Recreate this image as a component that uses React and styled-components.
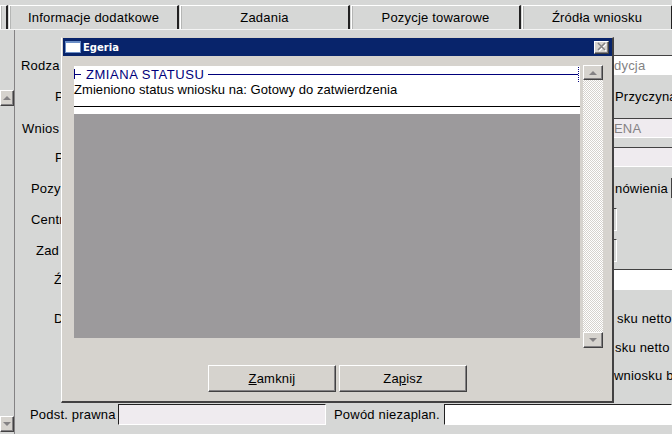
import React from 'react';
import styled, { createGlobalStyle, css } from 'styled-components';

const PAGE = '#d6d7d6';
const DIALOG = '#d6d3ce';
const NAVY = '#08246b';
const LAVENDER = '#efebef';

const GlobalStyle = createGlobalStyle`
  html, body {
    margin: 0;
    padding: 0;
    background: ${PAGE};
  }
  body {
    font-family: "Liberation Sans", Arial, sans-serif;
    font-size: 13px;
    letter-spacing: 0.2px;
    color: #000;
  }
`;

const raised = css`
  background: ${DIALOG};
  border-top: 1px solid #fff;
  border-left: 1px solid #fff;
  border-right: 1px solid #424142;
  border-bottom: 1px solid #424142;
  box-shadow: inset -1px -1px 0 #848284;
  box-sizing: border-box;
`;

const Screen = styled.div`
  position: relative;
  width: 672px;
  height: 434px;
  overflow: hidden;
  background: ${PAGE};
`;

const TabBar = styled.div`
  display: flex;
  gap: 1px;
  height: 30px;
  padding-top: 5px;
  box-sizing: border-box;
  border-bottom: 1px solid #f4f4f4;
`;

const Tab = styled.div`
  width: ${(p) => p.$width}px;
  flex: none;
  display: flex;
  align-items: center;
  justify-content: center;
  box-sizing: border-box;
  border-top: 1px solid #fff;
  border-left: 1px solid #fff;
  border-right: 2px solid #212021;
  box-shadow: inset 1px 0 0 #b5b6b5;
`;

const Body = styled.div`
  display: flex;
  height: 404px;
`;

const SideScroll = styled.div`
  width: 15px;
  flex: none;
  display: flex;
  flex-direction: column;
  justify-content: space-between;
  padding: 60px 0 2px;
  box-sizing: border-box;
  border-right: 1px solid #848284;
`;

const ArrowButton = styled.div`
  ${raised}
  display: flex;
  align-items: center;
  justify-content: center;
  flex: none;
  width: ${(p) => p.$width || 14}px;
  height: ${(p) => p.$height || 16}px;
`;

const Arrow = styled.span`
  width: 0;
  height: 0;
  border-left: 4px solid transparent;
  border-right: 4px solid transparent;
  ${(p) =>
    p.$down
      ? 'border-top: 4px solid #848284;'
      : 'border-bottom: 4px solid #848284;'}
`;

const Form = styled.div`
  flex: 1;
  display: flex;
  flex-direction: column;
  min-width: 0;
`;

const Row = styled.div`
  display: flex;
  justify-content: space-between;
  align-items: center;
  height: ${(p) => p.$height}px;
  margin-top: ${(p) => p.$top}px;
`;

const Label = styled.span`
  padding-left: ${(p) => p.$indent}px;
  white-space: nowrap;
`;

const RightCell = styled.div`
  width: 58px;
  height: 100%;
  flex: none;
  box-sizing: border-box;
  padding-left: ${(p) => p.$pad || 0}px;
  display: flex;
  align-items: center;
  gap: 3px;
  white-space: nowrap;
  overflow: hidden;
`;

const Field = styled.div`
  flex: ${(p) => (p.$width ? 'none' : 1)};
  width: ${(p) => (p.$width ? `${p.$width}px` : 'auto')};
  height: 100%;
  box-sizing: border-box;
  display: flex;
  align-items: center;
  color: #848284;
  background: ${(p) => p.$bg || '#fff'};
  border-top: 1px solid #424142;
  border-bottom: 1px solid #fff;
  ${(p) => p.$framed && 'border-right: 1px solid #fff;'}
`;

const StubField = styled.div`
  width: 2px;
  height: 20px;
  flex: none;
  background: ${LAVENDER};
  border-left: 1px solid #424142;
  box-sizing: border-box;
`;

const BottomRow = styled.div`
  display: flex;
  align-items: center;
  height: 21px;
  margin-top: 19px;
`;

const BottomLabel = styled.span`
  padding-left: ${(p) => p.$indent}px;
  width: ${(p) => p.$width}px;
  box-sizing: border-box;
  flex: none;
  white-space: nowrap;
`;

const BottomInput = styled.div`
  flex: ${(p) => (p.$width ? 'none' : 1)};
  width: ${(p) => (p.$width ? `${p.$width}px` : 'auto')};
  height: 100%;
  box-sizing: border-box;
  background: ${(p) => p.$bg};
  border-top: 1px solid #212021;
  border-left: 1px solid #212021;
  border-right: 1px solid #fff;
  border-bottom: 1px solid #fff;
`;

const Dialog = styled.div`
  position: absolute;
  left: 61px;
  top: 37px;
  width: 553px;
  height: 366px;
  box-sizing: border-box;
  display: flex;
  flex-direction: column;
  background: ${DIALOG};
  border-top: 1px solid #d6d3ce;
  border-left: 1px solid #fff;
  border-right: 2px solid #424142;
  border-bottom: 2px solid #424142;
  padding: 0 0 0 1px;
`;

const TitleBar = styled.div`
  display: flex;
  align-items: center;
  height: 18px;
  flex: none;
  background: ${NAVY};
  color: #fff;
  font-family: "DejaVu Sans", Verdana, sans-serif;
  font-size: 10px;
  font-weight: 700;
  letter-spacing: 0;
  padding: 0 3px 0 2px;
  gap: 2px;
`;

const WindowIcon = styled.span`
  width: 16px;
  height: 12px;
  flex: none;
  box-sizing: border-box;
  background: #fff;
  border-top: 2px solid #6b8ec6;
  border-left: 1px solid #6b8ec6;
  border-right: 1px solid #6b8ec6;
  border-bottom: 1px solid #6b8ec6;
`;

const TitleText = styled.span`
  flex: 1;
`;

const CloseButton = styled.div`
  ${raised}
  width: 15px;
  height: 13px;
  display: flex;
  align-items: center;
  justify-content: center;
`;

const Main = styled.div`
  display: flex;
  align-items: flex-start;
  height: 282px;
  margin-top: 10px;
  padding-left: 11px;
  flex: none;
`;

const Document = styled.div`
  width: 506px;
  height: 272px;
  flex: none;
  display: flex;
  flex-direction: column;
  background: #9c9a9c;
`;

const Note = styled.div`
  height: 48px;
  flex: none;
  box-sizing: border-box;
  background: #fff;
  padding-top: 1px;
`;

const Legend = styled.div`
  display: flex;
  align-items: center;
  height: 14px;
  color: #00007b;
  letter-spacing: 0.55px;
`;

const LegendTick = styled.span`
  width: 7px;
  height: 10px;
  flex: none;
  margin-right: 5px;
  box-sizing: border-box;
  border-left: 1px solid #00007b;
  background: linear-gradient(#00007b, #00007b) center / 100% 1px no-repeat;
`;

const LegendText = styled.span`
  padding: 0 4px 0 0;
  white-space: nowrap;
`;

const LegendLine = styled.span`
  flex: 1;
  height: 1px;
  background: #00007b;
`;

const LegendEnd = styled.span`
  width: 1px;
  height: 15px;
  flex: none;
  margin-right: 1px;
  background: repeating-linear-gradient(#00007b 0 1px, #fff 1px 2px);
`;

const Message = styled.div`
  height: 26px;
  box-sizing: border-box;
  padding-top: 1px;
  border-bottom: 1px solid #000;
  line-height: 16px;
  letter-spacing: 0.06px;
`;

const Scroll = styled.div`
  width: 20px;
  height: 283px;
  margin-left: 3px;
  margin-top: -1px;
  display: flex;
  flex-direction: column;
`;

const Hatch = styled.div`
  flex: 1;
  background-color: #fff;
  background-image: conic-gradient(${DIALOG} 25%, #fff 0 50%, ${DIALOG} 0 75%, #fff 0);
  background-size: 2px 2px;
`;

const Footer = styled.div`
  display: flex;
  justify-content: center;
  gap: 3px;
  margin-top: 17px;
`;

const Button = styled.div`
  ${raised}
  width: 128px;
  height: 27px;
  display: flex;
  align-items: center;
  justify-content: center;
`;

const Key = styled.span`
  text-decoration: underline;
`;

const tabs = [
  { width: 8, text: '' },
  { width: 170, text: 'Informacje dodatkowe' },
  { width: 170, text: 'Zadania' },
  { width: 170, text: 'Pozycje towarowe' },
  { width: 151, text: 'Źródła wniosku' },
];

export default function App() {
  return (
    <Screen>
      <GlobalStyle />

      <TabBar>
        {tabs.map((tab, index) => (
          <Tab key={index} $width={tab.width}>
            {tab.text}
          </Tab>
        ))}
      </TabBar>

      <Body>
        <SideScroll>
          <ArrowButton>
            <Arrow />
          </ArrowButton>
          <ArrowButton>
            <Arrow $down />
          </ArrowButton>
        </SideScroll>

        <Form>
          <Row $top={25} $height={20}>
            <Label $indent={6}>Rodza</Label>
            <RightCell>
              <Field>dycja</Field>
            </RightCell>
          </Row>
          <Row $top={10} $height={22}>
            <Label $indent={40}>P</Label>
            <RightCell $pad={1}>Przyczyna</RightCell>
          </Row>
          <Row $top={11} $height={20}>
            <Label $indent={7}>Wnios</Label>
            <RightCell>
              <Field $bg={LAVENDER}>ENA</Field>
            </RightCell>
          </Row>
          <Row $top={9} $height={20}>
            <Label $indent={40}>P</Label>
            <RightCell>
              <Field $bg={LAVENDER} />
            </RightCell>
          </Row>
          <Row $top={11} $height={20}>
            <Label $indent={16}>Pozy</Label>
            <RightCell $pad={1}>
              nówienia
              <StubField />
            </RightCell>
          </Row>
          <Row $top={10} $height={23}>
            <Label $indent={16}>Centr</Label>
            <RightCell>
              <Field $bg={PAGE} $width={3} $framed />
            </RightCell>
          </Row>
          <Row $top={8} $height={23}>
            <Label $indent={21}>Zad</Label>
            <RightCell>
              <Field $bg={PAGE} $width={3} $framed />
            </RightCell>
          </Row>
          <Row $top={7} $height={21}>
            <Label $indent={39}>Ź</Label>
            <RightCell>
              <Field />
            </RightCell>
          </Row>
          <Row $top={18} $height={20}>
            <Label $indent={39}>D</Label>
            <RightCell $pad={3}>sku netto</RightCell>
          </Row>
          <Row $top={9} $height={20}>
            <span />
            <RightCell $pad={1}>sku netto l</RightCell>
          </Row>
          <Row $top={8} $height={20}>
            <span />
            <RightCell>wniosku b</RightCell>
          </Row>
          <BottomRow>
            <BottomLabel $indent={15} $width={103}>
              Podst. prawna
            </BottomLabel>
            <BottomInput $bg={LAVENDER} $width={208} />
            <BottomLabel $indent={8} $width={118}>
              Powód niezaplan.
            </BottomLabel>
            <BottomInput $bg="#fff" />
          </BottomRow>
        </Form>
      </Body>

      <Dialog>
        <TitleBar>
          <WindowIcon />
          <TitleText>Egeria</TitleText>
          <CloseButton>
            <svg width="10" height="10" viewBox="0 0 10 10">
              <path d="M2 2 L9 9 M9 2 L2 9" stroke="#fff" strokeWidth="1.6" fill="none" />
              <path d="M1 1 L8 8 M8 1 L1 8" stroke="#848284" strokeWidth="1.6" fill="none" />
            </svg>
          </CloseButton>
        </TitleBar>

        <Main>
          <Document>
            <Note>
              <Legend>
                <LegendTick />
                <LegendText>ZMIANA STATUSU</LegendText>
                <LegendLine />
                <LegendEnd />
              </Legend>
              <Message>Zmieniono status wniosku na: Gotowy do zatwierdzenia</Message>
            </Note>
          </Document>
          <Scroll>
            <ArrowButton $width={20} $height={15}>
              <Arrow />
            </ArrowButton>
            <Hatch />
            <ArrowButton $width={20} $height={16}>
              <Arrow $down />
            </ArrowButton>
          </Scroll>
        </Main>

        <Footer>
          <Button>
            <span>
              <Key>Z</Key>amknij
            </span>
          </Button>
          <Button>
            <span>
              Za<Key>p</Key>isz
            </span>
          </Button>
        </Footer>
      </Dialog>
    </Screen>
  );
}
